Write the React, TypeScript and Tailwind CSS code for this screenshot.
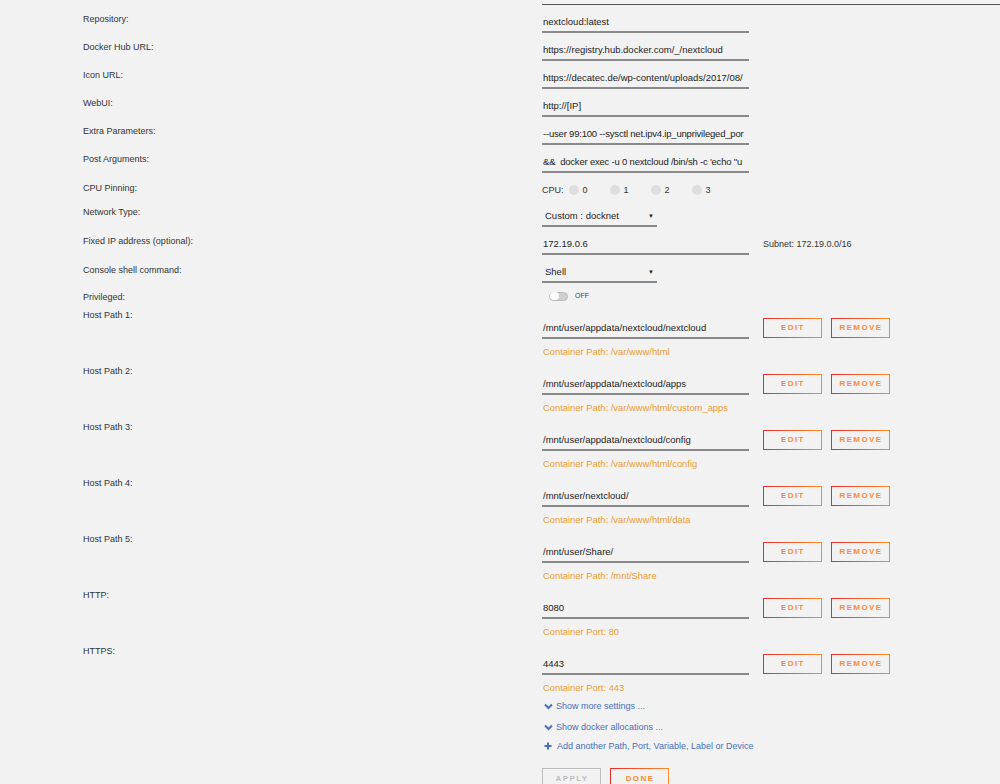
import React from "react";

const font = { fontFamily: '"Liberation Sans", Arial, sans-serif' };

function Label({ text, pt = "pt-[7px]" }: { text: string; pt?: string }) {
  return (
    <div className={`w-[459px] shrink-0 ${pt} text-[9px] leading-[14px] text-[#333]`}>{text}</div>
  );
}

function TextRow({ label, value, h = "h-[28px]", tight = false }: { label: string; value: string; h?: string; tight?: boolean }) {
  return (
    <div className={`flex ${h}`}>
      <Label text={label} />
      <div
        className={`mt-[6px] h-[22px] w-[207px] overflow-hidden whitespace-pre border-b-2 border-[#8a8a8a] pl-[1px] pt-[2px] text-[9.5px] leading-[18px] text-[#222] ${tight ? "tracking-[-0.2px]" : ""}`}
      >
        {value}
      </div>
    </div>
  );
}

function SelectRow({ label, value, h = "h-[28px]", mt = "mt-[6px]" }: { label: string; value: string; h?: string; mt?: string }) {
  return (
    <div className={`flex ${h}`}>
      <Label text={label} pt="pt-[8px]" />
      <div className={`${mt} flex h-[22px] w-[115px] items-center justify-between border-b-2 border-[#8a8a8a] pl-[3px] pr-[3px] pt-[3px] text-[9.5px] text-[#222]`}>
        <span>{value}</span>
        <span className="text-[6px]">▼</span>
      </div>
    </div>
  );
}

function GradBtn({ text, w, h = "h-[20px]" }: { text: string; w: string; h?: string }) {
  return (
    <div
      className={`${w} ${h} flex items-center justify-center border [border-image:linear-gradient(90deg,#e22d2d,#ff8a2b)_1]`}
    >
      <span className="pl-[1px] text-[8px] font-bold tracking-[1.4px] text-[#f98a3a]">{text}</span>
    </div>
  );
}

function PathRow({ label, value, note }: { label: string; value: string; note: string }) {
  return (
    <div className="flex h-[56px]">
      <Label text={label} pt="pt-[4px]" />
      <div className="flex flex-col">
        <div className="mt-[13px] flex items-end">
          <div className="h-[22px] w-[207px] overflow-hidden whitespace-nowrap border-b-2 border-[#8a8a8a] pl-[1px] pt-[2px] text-[9.5px] leading-[18px] text-[#222]">
            {value}
          </div>
          <div className="mb-[1px] ml-[14px] flex gap-[9px]">
            <GradBtn text="EDIT" w="w-[59px]" />
            <GradBtn text="REMOVE" w="w-[59px]" />
          </div>
        </div>
        <div className="mt-[6px] pl-[1px] text-[9.4px] leading-[14px] text-[#f09b32]">{note}</div>
      </div>
    </div>
  );
}

function Chevron() {
  return (
    <svg width="9" height="7" viewBox="0 0 9 7" className="mr-[3px]">
      <polyline points="1,1.5 4.5,5 8,1.5" fill="none" stroke="#4a6fb8" strokeWidth="2" />
    </svg>
  );
}

function Plus() {
  return (
    <svg width="8" height="8" viewBox="0 0 8 8" className="mr-[5px]">
      <path d="M4 0.5V7.5M0.5 4H7.5" stroke="#4a6fb8" strokeWidth="2" />
    </svg>
  );
}

export default function App() {
  const cpus = ["0", "1", "2", "3"];
  return (
    <div style={font} className="min-h-[784px] w-[1000px] overflow-hidden bg-[#f2f2f2] pl-[83px]">
      <div className="ml-[459px] h-[5px] border-b border-[#555]" />
      <TextRow label="Repository:" value="nextcloud:latest" />
      <TextRow label="Docker Hub URL:" value="https://registry.hub.docker.com/_/nextcloud" />
      <TextRow label="Icon URL:" value="https://decatec.de/wp-content/uploads/2017/08/" />
      <TextRow label="WebUI:" value="http://[IP]" />
      <TextRow label="Extra Parameters:" value="--user 99:100 --sysctl net.ipv4.ip_unprivileged_por" tight />
      <TextRow label="Post Arguments:" value={`&&  docker exec -u 0 nextcloud /bin/sh -c 'echo "u`} tight />
      <div className="flex h-[24px]">
        <Label text="CPU Pinning:" pt="pt-[8px]" />
        <div className="flex items-center self-start pt-[10px] text-[9px] leading-[14px] text-[#333]">
          <span className="mr-[5px]">CPU:</span>
          {cpus.map((c) => (
            <div key={c} className="flex w-[41px] items-center">
              <span className="mr-[4px] inline-block h-[10px] w-[10px] rounded-full bg-[#dedede]" />
              <span>{c}</span>
            </div>
          ))}
        </div>
      </div>
      <SelectRow label="Network Type:" value="Custom : docknet" h="h-[30px]" mt="mt-[8px]" />
      <div className="flex h-[28px]">
        <Label text="Fixed IP address (optional):" />
        <div className="mt-[6px] h-[22px] w-[207px] border-b-2 border-[#8a8a8a] pl-[1px] pt-[2px] text-[9.5px] leading-[18px] text-[#222]">
          172.19.0.6
        </div>
        <div className="ml-[14px] pt-[10px] text-[9px] leading-[14px] text-[#333]">Subnet: 172.19.0.0/16</div>
      </div>
      <SelectRow label="Console shell command:" value="Shell" />
      <div className="flex h-[21px]">
        <Label text="Privileged:" />
        <div className="ml-[7px] flex items-center self-start pt-[8px]">
          <div className="flex h-[9px] w-[19px] items-center rounded-full border border-[#bbb] bg-[#cfcfcf]">
            <div className="h-[8px] w-[9px] rounded-full bg-white" />
          </div>
          <span className="ml-[7px] text-[7px] text-[#444]">OFF</span>
        </div>
      </div>
      <PathRow label="Host Path 1:" value="/mnt/user/appdata/nextcloud/nextcloud" note="Container Path: /var/www/html" />
      <PathRow label="Host Path 2:" value="/mnt/user/appdata/nextcloud/apps" note="Container Path: /var/www/html/custom_apps" />
      <PathRow label="Host Path 3:" value="/mnt/user/appdata/nextcloud/config" note="Container Path: /var/www/html/config" />
      <PathRow label="Host Path 4:" value="/mnt/user/nextcloud/" note="Container Path: /var/www/html/data" />
      <PathRow label="Host Path 5:" value="/mnt/user/Share/" note="Container Path: /mnt/Share" />
      <PathRow label="HTTP:" value="8080" note="Container Port: 80" />
      <PathRow label="HTTPS:" value="4443" note="Container Port: 443" />
      <div className="ml-[459px] flex flex-col text-[9px] leading-[14px] text-[#4a6fb8]">
        <div className="mt-[3px] flex items-center pl-[2px]">
          <Chevron />
          <span>Show more settings ...</span>
        </div>
        <div className="mt-[7px] flex items-center pl-[2px]">
          <Chevron />
          <span>Show docker allocations ...</span>
        </div>
        <div className="mt-[5px] flex items-center pl-[2px]">
          <Plus />
          <span>Add another Path, Port, Variable, Label or Device</span>
        </div>
        <div className="mt-[15px] flex gap-[9px]">
          <div className="flex h-[22px] w-[59px] items-center justify-center border border-[#bdbdbd] pl-[1px] text-[8px] font-bold tracking-[1.4px] text-[#bdbdbd]">
            APPLY
          </div>
          <GradBtn text="DONE" w="w-[59px]" h="h-[22px]" />
        </div>
      </div>
    </div>
  );
}
